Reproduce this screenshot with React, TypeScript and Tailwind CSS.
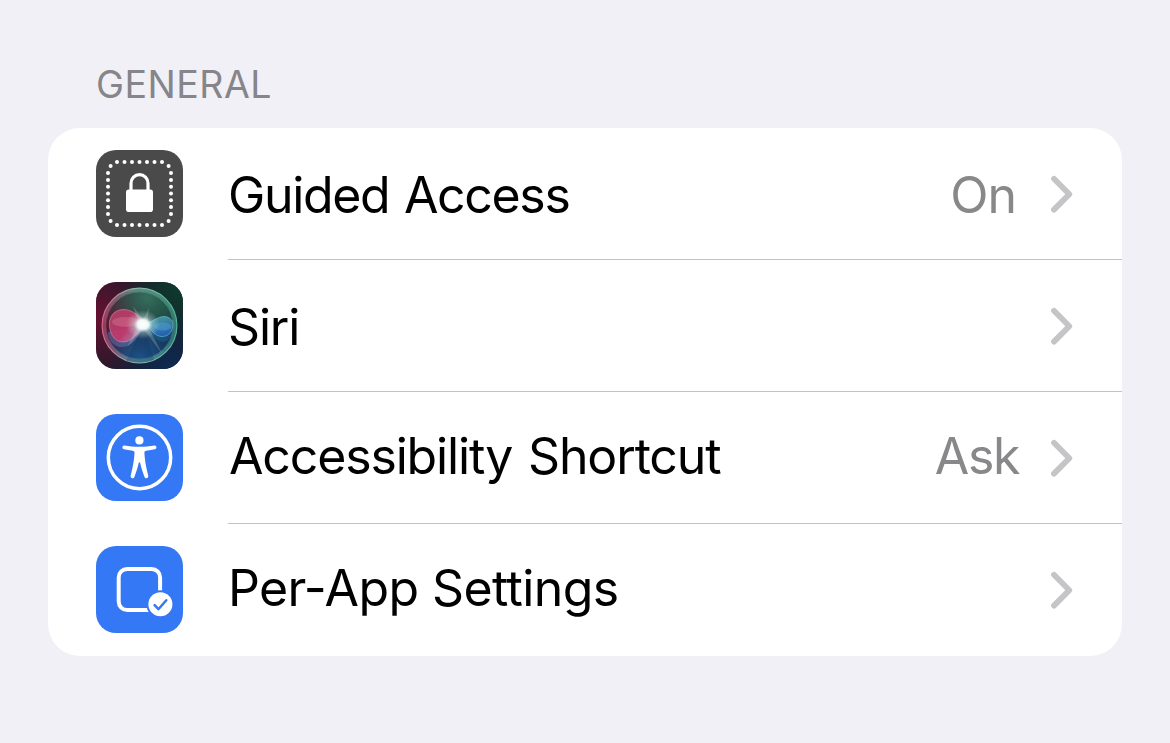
/**
 * Grouped settings list: a "General" section of accessibility options.
 *
 * Rows are data-driven. Each one has a tile icon, a label, an optional
 * current value and a disclosure chevron. Separators start at the label,
 * not at the card edge, so they belong to the row's content column.
 */
import type { ComponentType } from "react";
import clsx from "clsx";

// ── Icons ───────────────────────────────────────────────────────────────────

const TILE = "size-[87px] shrink-0 rounded-[20px]";

const EDGE_X = [21, 28.5, 36, 43.5, 51, 58.5, 66];
const EDGE_Y = [23, 29.9, 36.7, 43.5, 50.3, 57.1, 64];

function GuidedAccessIcon() {
  return (
    <svg viewBox="0 0 87 87" className={clsx(TILE, "bg-[#4a4a4a]")} aria-hidden>
      <g fill="#fff">
        {EDGE_X.map((x) => (
          <g key={x}>
            <circle cx={x} cy="12" r="2" />
            <circle cx={x} cy="75" r="2" />
          </g>
        ))}
        {EDGE_Y.map((y) => (
          <g key={y}>
            <circle cx="12" cy={y} r="2" />
            <circle cx="75" cy={y} r="2" />
          </g>
        ))}
        <circle cx="14.6" cy="16" r="2" />
        <circle cx="72.6" cy="16" r="2" />
        <circle cx="14.6" cy="71" r="2" />
        <circle cx="72.6" cy="71" r="2" />
        <rect x="30" y="39.6" width="27" height="22.4" rx="2.8" />
      </g>
      <path
        d="M35 41V33.4a8.5 8.8 0 0 1 17 0V41"
        fill="none"
        stroke="#fff"
        strokeWidth="3.2"
      />
    </svg>
  );
}

function SiriIcon() {
  return (
    <svg viewBox="0 0 87 87" className={clsx(TILE, "bg-[#1c1a2b]")} aria-hidden>
      <defs>
        <radialGradient id="siri-red" cx="0" cy="0.4" r="0.75">
          <stop offset="0" stopColor="#66112f" />
          <stop offset="1" stopColor="#66112f" stopOpacity="0" />
        </radialGradient>
        <radialGradient id="siri-green" cx="0.95" cy="0.1" r="0.7">
          <stop offset="0" stopColor="#0d3a2c" />
          <stop offset="1" stopColor="#0d3a2c" stopOpacity="0" />
        </radialGradient>
        <radialGradient id="siri-navy" cx="0.85" cy="1" r="0.7">
          <stop offset="0" stopColor="#0d2a52" />
          <stop offset="1" stopColor="#0d2a52" stopOpacity="0" />
        </radialGradient>
        <radialGradient id="siri-orb-green" cx="0.6" cy="0.12" r="0.7">
          <stop offset="0" stopColor="#3a7a66" stopOpacity="0.85" />
          <stop offset="1" stopColor="#2f7a60" stopOpacity="0" />
        </radialGradient>
        <radialGradient id="siri-orb-blue" cx="0.5" cy="0.95" r="0.65">
          <stop offset="0" stopColor="#22659a" stopOpacity="0.95" />
          <stop offset="1" stopColor="#1c4f8a" stopOpacity="0" />
        </radialGradient>
        <linearGradient id="siri-rim" x1="0" y1="0.5" x2="1" y2="0.5">
          <stop offset="0" stopColor="#d0668c" />
          <stop offset="0.4" stopColor="#8fb5ab" />
          <stop offset="1" stopColor="#4fb59a" />
        </linearGradient>
        <linearGradient id="siri-pink" x1="0.1" y1="0.2" x2="0.9" y2="0.7">
          <stop offset="0" stopColor="#b5406a" stopOpacity="0.9" />
          <stop offset="0.55" stopColor="#c9366a" stopOpacity="0.9" />
          <stop offset="1" stopColor="#b98ab0" stopOpacity="0.8" />
        </linearGradient>
        <linearGradient id="siri-sky" x1="0" y1="0" x2="0.4" y2="1">
          <stop offset="0" stopColor="#5cb9b4" stopOpacity="0.75" />
          <stop offset="1" stopColor="#2767ba" stopOpacity="0.85" />
        </linearGradient>
        <radialGradient id="siri-glow">
          <stop offset="0" stopColor="#fff" />
          <stop offset="0.32" stopColor="#f6fffc" stopOpacity="0.95" />
          <stop offset="0.55" stopColor="#d5efe8" stopOpacity="0.4" />
          <stop offset="1" stopColor="#bfe5dc" stopOpacity="0" />
        </radialGradient>
      </defs>
      <rect width="87" height="87" fill="url(#siri-red)" />
      <rect width="87" height="87" fill="url(#siri-green)" />
      <rect width="87" height="87" fill="url(#siri-navy)" />

      {/* Glass orb */}
      <circle cx="43.5" cy="43.5" r="37" fill="url(#siri-orb-green)" />
      <circle cx="43.5" cy="43.5" r="37" fill="url(#siri-orb-blue)" />
      <circle cx="43.5" cy="43.5" r="35.6" fill="none" stroke="url(#siri-rim)" strokeWidth="3.4" opacity="0.5" />
      <circle cx="43.5" cy="43.5" r="37.4" fill="none" stroke="url(#siri-rim)" strokeWidth="1.2" />
      <circle cx="43.5" cy="43.5" r="33.6" fill="none" stroke="url(#siri-rim)" strokeWidth="0.7" opacity="0.5" />

      {/* Ribbons */}
      <path d="M47 43C42 58 35 66 23 65C16 63 12 57 12 50Z" fill="#6a74b4" opacity="0.5" />
      <path d="M47 43C54 55 65 62 71 59C76 55 77 50 77 45Z" fill="#1e6aa8" opacity="0.4" />
      <path d="M47 43L30 79C39 81 50 81 58 78Z" fill="#0d2b5c" opacity="0.25" />
      <path
        d="M50 42C45 36 38 27.5 27 27.5C17 28 12.5 36 13.5 44.5C14.5 54 20 60.5 28 60C37 59.5 42 50 50 42Z"
        fill="url(#siri-pink)"
        stroke="#dc8aa8"
        strokeWidth="0.6"
      />
      <ellipse cx="30" cy="40" rx="14" ry="5" fill="#e79aae" opacity="0.28" />
      <path
        d="M49 42C56 40 62 34 69 34.5C75 35.5 77.5 39 77 44C76 51 71 55 65 54.5C58 53.5 55 47 49 42Z"
        fill="url(#siri-sky)"
        stroke="#65c4d6"
        strokeWidth="0.6"
      />
      <ellipse cx="67" cy="44.5" rx="8.5" ry="4" fill="#57a9dc" opacity="0.4" />

      {/* Flare */}
      <g fill="#d6efe9" opacity="0.22">
        <path d="M43 43L37 24L49 40Z" />
        <path d="M46 40L53 26L51 42Z" />
        <path d="M47 46L67 73L51 43Z" />
        <path d="M43 42L31 65L49 46Z" />
      </g>
      <ellipse cx="47" cy="42.5" rx="17" ry="14.5" fill="url(#siri-glow)" />
    </svg>
  );
}

function AccessibilityIcon() {
  return (
    <svg viewBox="0 0 87 87" className={clsx(TILE, "bg-[#3478f6]")} aria-hidden>
      <circle cx="43.5" cy="43.5" r="31.2" fill="none" stroke="#fff" strokeWidth="3.5" />
      <circle cx="43.4" cy="26.4" r="4.1" fill="#fff" />
      <path
        d="M28.5 31.4C33 32.3 38 32.8 43.4 32.8S54 32.3 58.4 31.4C60.8 31.1 61.2 34.8 58.9 35.3C55 36.1 51.5 36.5 49.6 36.9C48.6 37.2 48.3 37.8 48.4 39C48.7 46.5 50.2 53.5 52.2 61.5C52.8 64.4 49.4 65.3 48.4 62.7C46.4 57.5 45 52.5 44.1 48.8C43.9 47.9 43 47.9 42.8 48.8C41.9 52.5 40.5 57.5 38.5 62.7C37.5 65.3 34.1 64.4 34.7 61.5C36.7 53.5 38.2 46.5 38.5 39C38.6 37.8 38.3 37.2 37.3 36.9C35.4 36.5 31.9 36.1 28 35.3C25.7 34.8 26.1 31.1 28.5 31.4Z"
        fill="#fff"
      />
    </svg>
  );
}

function PerAppIcon() {
  return (
    <svg viewBox="0 0 87 87" className={clsx(TILE, "bg-[#3478f6]")} aria-hidden>
      <rect x="22.7" y="22.9" width="41.4" height="41.2" rx="8.5" fill="none" stroke="#fff" strokeWidth="4" />
      <circle cx="64.4" cy="58.3" r="14" fill="#3478f6" />
      <circle cx="64.4" cy="58.3" r="12" fill="#fff" />
      <path
        d="M58.6 59.2L62.4 63.2L70.3 54.2"
        fill="none"
        stroke="#3478f6"
        strokeWidth="2.5"
        strokeLinecap="round"
        strokeLinejoin="round"
      />
    </svg>
  );
}

function Chevron() {
  return (
    <svg viewBox="0 0 24 38" className="h-[38px] w-6 shrink-0" aria-hidden>
      <path
        d="M4 3.8L19.3 19.2L4 34.6"
        fill="none"
        stroke="#c5c5c7"
        strokeWidth="5.8"
        strokeLinecap="round"
        strokeLinejoin="round"
      />
    </svg>
  );
}

// ── Rows ────────────────────────────────────────────────────────────────────

type SettingRow = {
  label: string;
  value?: string;
  icon: ComponentType;
  /** Optical tracking and baseline nudge for the label and value. */
  labelClass: string;
  valueClass?: string;
};

const ROWS: SettingRow[] = [
  {
    label: "Guided Access",
    value: "On",
    icon: GuidedAccessIcon,
    labelClass: "pt-0.5 tracking-[-1.35px] [word-spacing:2px]",
    valueClass: "pt-0.5 pr-[34px] tracking-[-1px]",
  },
  { label: "Siri", icon: SiriIcon, labelClass: "pt-0.5 tracking-[-1.2px]" },
  {
    label: "Accessibility Shortcut",
    value: "Ask",
    icon: AccessibilityIcon,
    labelClass: "pb-1 pl-px tracking-[-1.15px] [word-spacing:3px]",
    valueClass: "pb-1 pr-[31px] tracking-[-1.4px]",
  },
  { label: "Per-App Settings", icon: PerAppIcon, labelClass: "pb-1 tracking-[-0.6px]" },
];

export default function App() {
  return (
    <main className="flex h-[743px] w-[1170px] flex-col bg-[#f1f0f6] px-12 pt-[60px] font-[Inter,sans-serif]">
      <h2 className="h-[68px] pl-[48px] text-[37.5px] leading-[50px] tracking-[0.5px] text-[#85858a]">
        GENERAL
      </h2>

      <ul className="overflow-hidden rounded-[32px] bg-white">
        {ROWS.map(({ label, value, icon: Icon, labelClass, valueClass }, i) => (
          <li key={label} className="flex h-[132px] pl-12">
            <div className="pt-[22px]">
              <Icon />
            </div>
            <div
              className={clsx(
                "ml-[45px] flex flex-1 items-center border-b pr-12 text-[50px] leading-[60px]",
                i < ROWS.length - 1 ? "border-[#c3c3c5]" : "border-transparent",
              )}
            >
              <span className={clsx("flex-1 text-black", labelClass)}>{label}</span>
              {value && <span className={clsx("text-[#88888b]", valueClass)}>{value}</span>}
              <Chevron />
            </div>
          </li>
        ))}
      </ul>
    </main>
  );
}
